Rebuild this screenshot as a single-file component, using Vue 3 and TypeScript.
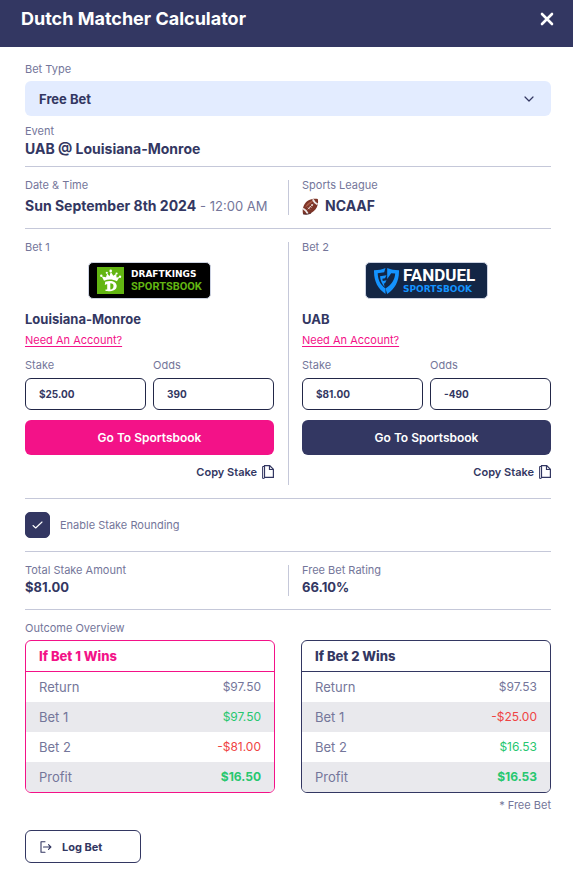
<script setup lang="ts">
import { ref } from 'vue'

type Tone = 'plain' | 'gain' | 'loss'

interface Bet {
  id: number
  brand: 'draftkings' | 'fanduel'
  team: string
  stake: string
  odds: string
}

interface OutcomeRow {
  label: string
  value: string
  tone: Tone
}

interface Outcome {
  id: number
  title: string
  rows: OutcomeRow[]
}

const betType = ref('Free Bet')
const rounding = ref(true)

const bets = ref<Bet[]>([
  { id: 1, brand: 'draftkings', team: 'Louisiana-Monroe', stake: '$25.00', odds: '390' },
  { id: 2, brand: 'fanduel', team: 'UAB', stake: '$81.00', odds: '-490' },
])

const outcomes: Outcome[] = [
  {
    id: 1,
    title: 'If Bet 1 Wins',
    rows: [
      { label: 'Return', value: '$97.50', tone: 'plain' },
      { label: 'Bet 1', value: '$97.50', tone: 'gain' },
      { label: 'Bet 2', value: '-$81.00', tone: 'loss' },
      { label: 'Profit', value: '$16.50', tone: 'gain' },
    ],
  },
  {
    id: 2,
    title: 'If Bet 2 Wins',
    rows: [
      { label: 'Return', value: '$97.53', tone: 'plain' },
      { label: 'Bet 1', value: '-$25.00', tone: 'loss' },
      { label: 'Bet 2', value: '$16.53', tone: 'gain' },
      { label: 'Profit', value: '$16.53', tone: 'gain' },
    ],
  },
]
</script>

<template>
  <main class="calculator">
    <header class="bar">
      <h1 class="title">Dutch Matcher Calculator</h1>
      <button class="close" type="button" aria-label="Close">
        <svg width="14" height="14" viewBox="0 0 14 14" fill="none" stroke="currentColor" stroke-width="2.6" stroke-linecap="round">
          <path d="M2 2l10 10M12 2L2 12" />
        </svg>
      </button>
    </header>

    <div class="body">
      <section class="intro">
        <label class="label" for="bet-type">Bet Type</label>
        <div class="select-wrap">
          <select id="bet-type" v-model="betType" class="select">
            <option>Free Bet</option>
          </select>
          <svg class="chevron" width="10" height="6" viewBox="0 0 10 6" fill="none" stroke="currentColor" stroke-width="1.2" stroke-linecap="round" stroke-linejoin="round">
            <path d="M1 1l4 4 4-4" />
          </svg>
        </div>
        <div class="event">
          <span class="label">Event</span>
          <strong class="value">UAB @ Louisiana-Monroe</strong>
        </div>
      </section>

      <section class="split">
        <div class="cell stack">
          <span class="label">Date &amp; Time</span>
          <span class="value"><strong>Sun September 8th 2024</strong> <span class="time">- 12:00 AM</span></span>
        </div>
        <div class="cell stack">
          <span class="label">Sports League</span>
          <span class="value league">
            <svg width="17" height="17" viewBox="0 0 17 17" aria-hidden="true">
              <path d="M1 15.8C-.2 10.500 2.300 5 6.200 2.600 9.200.7 13 .2 15.800 1c1.100 5-.9 9.600-4.200 12.300C8.700 15.700 4.800 17 1 15.800z" fill="#7d3427" />
              <path d="M3.200 9.500C4.400 5.800 8 3 12.500 2.500c-3 2-5.500 4.500-9.300 7z" fill="#a95c47" />
              <path d="M1 10.500c1.800.9 3.800 2.900 4.900 5.300M10.800 1.300c1 2.200 2.800 4.100 4.800 5" fill="none" stroke="#eee9e9" stroke-width="1.900" />
              <path d="M5.800 11.300l5.400-5.400M6 9.500l1.800 1.800M7.600 7.900l1.800 1.800M9.200 6.300L11 8.100" fill="none" stroke="#e7d9d4" stroke-width=".9" />
              <path d="M1 15.800c2.900.9 5.800.3 8.200-.9" fill="none" stroke="#462024" stroke-width="1" />
            </svg>
            <strong>NCAAF</strong>
          </span>
        </div>
      </section>

      <section class="split">
        <form v-for="bet in bets" :key="bet.id" class="cell bet" :class="`bet-${bet.id}`" @submit.prevent>
          <span class="label">Bet {{ bet.id }}</span>

          <div class="brand" :class="bet.brand">
            <template v-if="bet.brand === 'draftkings'">
              <svg class="crown" width="27" height="27" viewBox="0 0 27 27" aria-hidden="true">
                <path d="M0 0h27v27H0z" fill="#62b512" />
                <path d="M7 13.800L4.800 9.500l4.200.8 1.200-3.800 2.300 2.700 1.300-4.400 2.500 4 3-2 .2 3.700 3-.4-2.600 4.200c-4-2.200-8.700-2.400-12.900-.5z" fill="#fff" />
                <circle cx="4.300" cy="8.800" r="1.200" fill="#fff" />
                <circle cx="9.800" cy="5.800" r="1.100" fill="#fff" />
                <circle cx="13.700" cy="3.900" r="1.300" fill="#fff" />
                <circle cx="19.600" cy="6.500" r="1.100" fill="#fff" />
                <circle cx="23" cy="9.800" r="1.200" fill="#fff" />
                <path d="M8.200 14.700c5.500-1.900 11.500-.5 11.500 4.300 0 4.600-4.900 5.700-11.200 5.100v-1.600h1.700v-5.400l-2.400.9z" fill="#fff" />
                <path d="M13.300 16.300c2.300 0 3.200.9 3.200 2.800 0 2.200-1 3.300-3.200 3.400z" fill="#62b512" />
              </svg>
              <span class="names">
                <span class="dk-name">DRAFTKINGS</span>
                <span class="dk-book">SPORTSBOOK</span>
              </span>
            </template>
            <template v-else>
              <svg class="shield" width="25" height="26" viewBox="0 0 25 26" aria-hidden="true">
                <path d="M0 2.200C4.500 2.200 8 1.700 11.500 0l-1.300 4.300-6.500 1c.3 6.700 2.500 11.300 7.800 15.200V26C3.500 20.500-.2 13.200 0 2.200z" fill="#1493ff" />
                <path d="M13.200 0C17 1.700 20.500 2.200 25 2.200c.2 11-3.700 18.300-11.800 23.800l-1.700-5.500c6-3.700 9.300-8.700 9.700-15l-4-.3L13.200 11z" fill="#1493ff" />
                <path d="M6 8.300l6.500-1-1.500 3-2.700.5.500 2.100 3.700-.6-1.500 2.900-1.100.3.700 3.500C7.900 15.700 6.400 12.500 6 8.300z" fill="#1493ff" />
              </svg>
              <span class="names">
                <span class="fd-name">FANDUEL</span>
                <span class="fd-book">SPORTSBOOK</span>
              </span>
            </template>
          </div>

          <strong class="team">{{ bet.team }}</strong>
          <a class="account" href="#">Need An Account?</a>

          <div class="fields">
            <div class="field">
              <label class="label" :for="`stake-${bet.id}`">Stake</label>
              <input :id="`stake-${bet.id}`" v-model="bet.stake" class="input" type="text">
            </div>
            <div class="field">
              <label class="label" :for="`odds-${bet.id}`">Odds</label>
              <input :id="`odds-${bet.id}`" v-model="bet.odds" class="input" type="text">
            </div>
          </div>

          <button class="go" type="submit">Go To Sportsbook</button>
          <button class="copy" type="button">
            Copy Stake
            <svg width="12" height="14" viewBox="0 0 12 14" fill="none" stroke="currentColor" aria-hidden="true">
              <path d="M2.500.6h5.200l3.700 3.700v8.100H2.500z" stroke-width="1.200" />
              <path d="M7.500.6v3.900h3.900" stroke-width="1.200" />
              <path d="M2 1.500H.6v11.900h1.900" stroke-width="1" />
            </svg>
          </button>
        </form>
      </section>

      <section class="rounding">
        <span class="check-wrap">
          <input id="rounding" v-model="rounding" class="check" type="checkbox">
          <svg v-if="rounding" class="tick" width="11" height="8" viewBox="0 0 11 8" fill="none" stroke="currentColor" stroke-width="1.100" stroke-linecap="round" stroke-linejoin="round">
            <path d="M1 4.500L3.700 7 10 1" />
          </svg>
        </span>
        <label class="label" for="rounding">Enable Stake Rounding</label>
      </section>

      <section class="split">
        <div class="cell stack tight">
          <span class="label">Total Stake Amount</span>
          <strong class="value">$81.00</strong>
        </div>
        <div class="cell stack tight">
          <span class="label">Free Bet Rating</span>
          <strong class="value">66.10%</strong>
        </div>
      </section>

      <section class="overview">
        <h2 class="label">Outcome Overview</h2>
        <div class="cards">
          <div v-for="outcome in outcomes" :key="outcome.id" class="card" :class="`card-${outcome.id}`">
            <table class="table">
              <thead>
                <tr>
                  <th class="card-title" colspan="2" scope="colgroup">{{ outcome.title }}</th>
                </tr>
              </thead>
              <tbody>
                <tr v-for="row in outcome.rows" :key="row.label">
                  <th scope="row">{{ row.label }}</th>
                  <td :class="row.tone">{{ row.value }}</td>
                </tr>
              </tbody>
            </table>
          </div>
        </div>
        <p class="label note">* Free Bet</p>
      </section>

      <button class="log" type="button">
        <svg width="12" height="12" viewBox="0 0 12 12" fill="none" stroke="currentColor" stroke-width="1.100" stroke-linecap="round" stroke-linejoin="round" aria-hidden="true">
          <path d="M5 .8H1v10.400h4M3.500 6h7.300M8.500 3.700L10.900 6 8.500 8.300" />
        </svg>
        Log Bet
      </button>
    </div>
  </main>
</template>

<style>
body {
  margin: 0;
  background: #fff;
}
</style>

<style scoped>
.calculator {
  --navy: #333762;
  --pink: #f31288;
  --muted: #74769a;
  --line: #c5c8d9;
  font-family: Inter, "Liberation Sans", sans-serif;
  color: var(--navy);
}

button,
input,
select {
  box-sizing: border-box;
  margin: 0;
  font-family: inherit;
  color: inherit;
}

button {
  border: 0;
  cursor: pointer;
}

svg {
  display: block;
  flex: none;
}

.bar {
  display: flex;
  align-items: flex-start;
  justify-content: space-between;
  box-sizing: border-box;
  height: 47px;
  padding: 7px 19px 0 21px;
  background: var(--navy);
  color: #fff;
}

.title {
  margin: 0;
  font-size: 18px;
  line-height: 24px;
  font-weight: 700;
}

.close {
  padding: 5px 0;
  background: none;
  color: #fff;
}

.body {
  padding: 15px 22px 8px 25px;
}

.label {
  margin: 0;
  font-size: 11px;
  line-height: 10px;
  font-weight: 400;
  color: var(--muted);
}

.value {
  font-size: 14px;
  line-height: 18px;
  white-space: nowrap;
}

.intro {
  display: flex;
  flex-direction: column;
  gap: 7px;
  padding: 2px 0 8px;
  border-bottom: 1px solid var(--line);
}

.select-wrap {
  display: grid;
  align-items: center;
}

.select {
  grid-area: 1 / 1;
  width: 100%;
  height: 35px;
  padding: 0 14px;
  border: 0;
  border-radius: 6px;
  appearance: none;
  background: #e3ecff;
  font-size: 13px;
  font-weight: 700;
}

.chevron {
  grid-area: 1 / 1;
  justify-self: end;
  margin-right: 17px;
  pointer-events: none;
}

.event {
  display: flex;
  flex-direction: column;
  gap: 4px;
  padding-top: 3px;
}

.split {
  display: grid;
  grid-template-columns: 1fr 1fr;
  padding: 13px 0;
  border-bottom: 1px solid var(--line);
}

.cell {
  min-width: 0;
  padding-right: 14px;
}

.cell + .cell {
  padding: 0 0 0 13px;
  border-left: 1px solid var(--line);
}

.stack {
  display: flex;
  flex-direction: column;
  gap: 7px;
}

.tight {
  gap: 3px;
}

.tight .value {
  font-size: 13px;
}

.time {
  font-size: 13px;
  color: var(--muted);
}

.league {
  display: flex;
  align-items: center;
  gap: 6px;
}

.bet {
  display: flex;
  flex-direction: column;
}

.brand {
  display: flex;
  align-items: center;
  align-self: center;
  box-sizing: border-box;
  width: 123px;
  height: 37px;
  margin-top: 10px;
  padding-left: 8px;
  gap: 7px;
  border: 1px solid #ccd2e2;
  border-radius: 5px;
}

.draftkings {
  background: #000;
}

.fanduel {
  gap: 4px;
  background: #132645;
}

.names {
  display: flex;
  flex-direction: column;
  font-weight: 700;
  white-space: nowrap;
}

.dk-name {
  font-family: "DejaVu Sans", sans-serif;
  font-size: 9px;
  line-height: 11px;
  color: #fff;
}

.dk-book {
  font-family: Roboto, sans-serif;
  font-size: 11px;
  line-height: 13px;
  color: #62b512;
}

.fd-name {
  font-family: Roboto, sans-serif;
  font-size: 17px;
  line-height: 17px;
  color: #fff;
}

.fd-book {
  font-family: "DejaVu Sans", sans-serif;
  font-size: 9px;
  line-height: 11px;
  color: #1493ff;
}

.team {
  margin-top: 11px;
  font-size: 13px;
  line-height: 18px;
}

.account {
  align-self: flex-start;
  margin-top: 5px;
  font-size: 11px;
  line-height: 14px;
  color: var(--pink);
  text-underline-offset: 2px;
}

.fields {
  display: grid;
  grid-template-columns: 1fr 1fr;
  gap: 7px;
  margin-top: 13px;
}

.field {
  display: flex;
  flex-direction: column;
  gap: 8px;
  min-width: 0;
}

.input {
  width: 100%;
  height: 32px;
  padding: 0 13px;
  border: 1px solid #222748;
  border-radius: 6px;
  background: #fff;
  font-size: 10px;
  font-weight: 700;
}

.go {
  height: 35px;
  margin-top: 10px;
  border-radius: 6px;
  background: var(--navy);
  color: #fff;
  font-size: 12px;
  font-weight: 600;
}

.bet-1 .go {
  background: var(--pink);
}

.copy {
  display: flex;
  align-items: center;
  align-self: flex-end;
  gap: 5px;
  height: 18px;
  margin: 8px 0 4px;
  padding: 0;
  background: none;
  font-size: 11px;
  font-weight: 600;
}

.rounding {
  display: flex;
  align-items: center;
  gap: 10px;
  padding: 13px 0;
  border-bottom: 1px solid var(--line);
}

.check-wrap {
  display: grid;
  place-items: center;
}

.check {
  grid-area: 1 / 1;
  width: 25px;
  height: 26px;
  border: 1px solid var(--navy);
  border-radius: 5px;
  appearance: none;
}

.check:checked {
  background: var(--navy);
}

.tick {
  grid-area: 1 / 1;
  color: #fff;
  pointer-events: none;
}

.overview {
  display: flex;
  flex-direction: column;
  gap: 7px;
  padding-top: 13px;
}

.cards {
  display: grid;
  grid-template-columns: 1fr 1fr;
  gap: 26px;
}

.card {
  overflow: hidden;
  border: 1px solid var(--navy);
  border-radius: 6px;
}

.card-1 {
  border-color: var(--pink);
}

.table {
  width: 100%;
  border-spacing: 0;
  font-size: 13px;
  line-height: 18px;
  color: var(--muted);
}

.table th,
.table td {
  height: 30px;
  padding: 0 13px;
  font-weight: 400;
  text-align: left;
}

.table td {
  font-size: 12px;
  text-align: right;
}

.table .card-title {
  border-bottom: 1px solid var(--navy);
  font-size: 13px;
  font-weight: 800;
  color: var(--navy);
}

.card-1 .card-title {
  border-color: var(--pink);
  color: var(--pink);
}

.table tbody tr:nth-child(even) {
  background: #e9e9ed;
}

.table .gain {
  color: #27c76f;
}

.table .loss {
  color: #ef4444;
}

.table tr:last-child td {
  font-weight: 700;
}

.note {
  align-self: flex-end;
}

.log {
  display: flex;
  align-items: center;
  gap: 10px;
  width: 116px;
  height: 33px;
  margin-top: 20px;
  padding: 0 14px;
  border: 1px solid var(--navy);
  border-radius: 6px;
  background: #fff;
  font-size: 11px;
  font-weight: 700;
}
</style>
